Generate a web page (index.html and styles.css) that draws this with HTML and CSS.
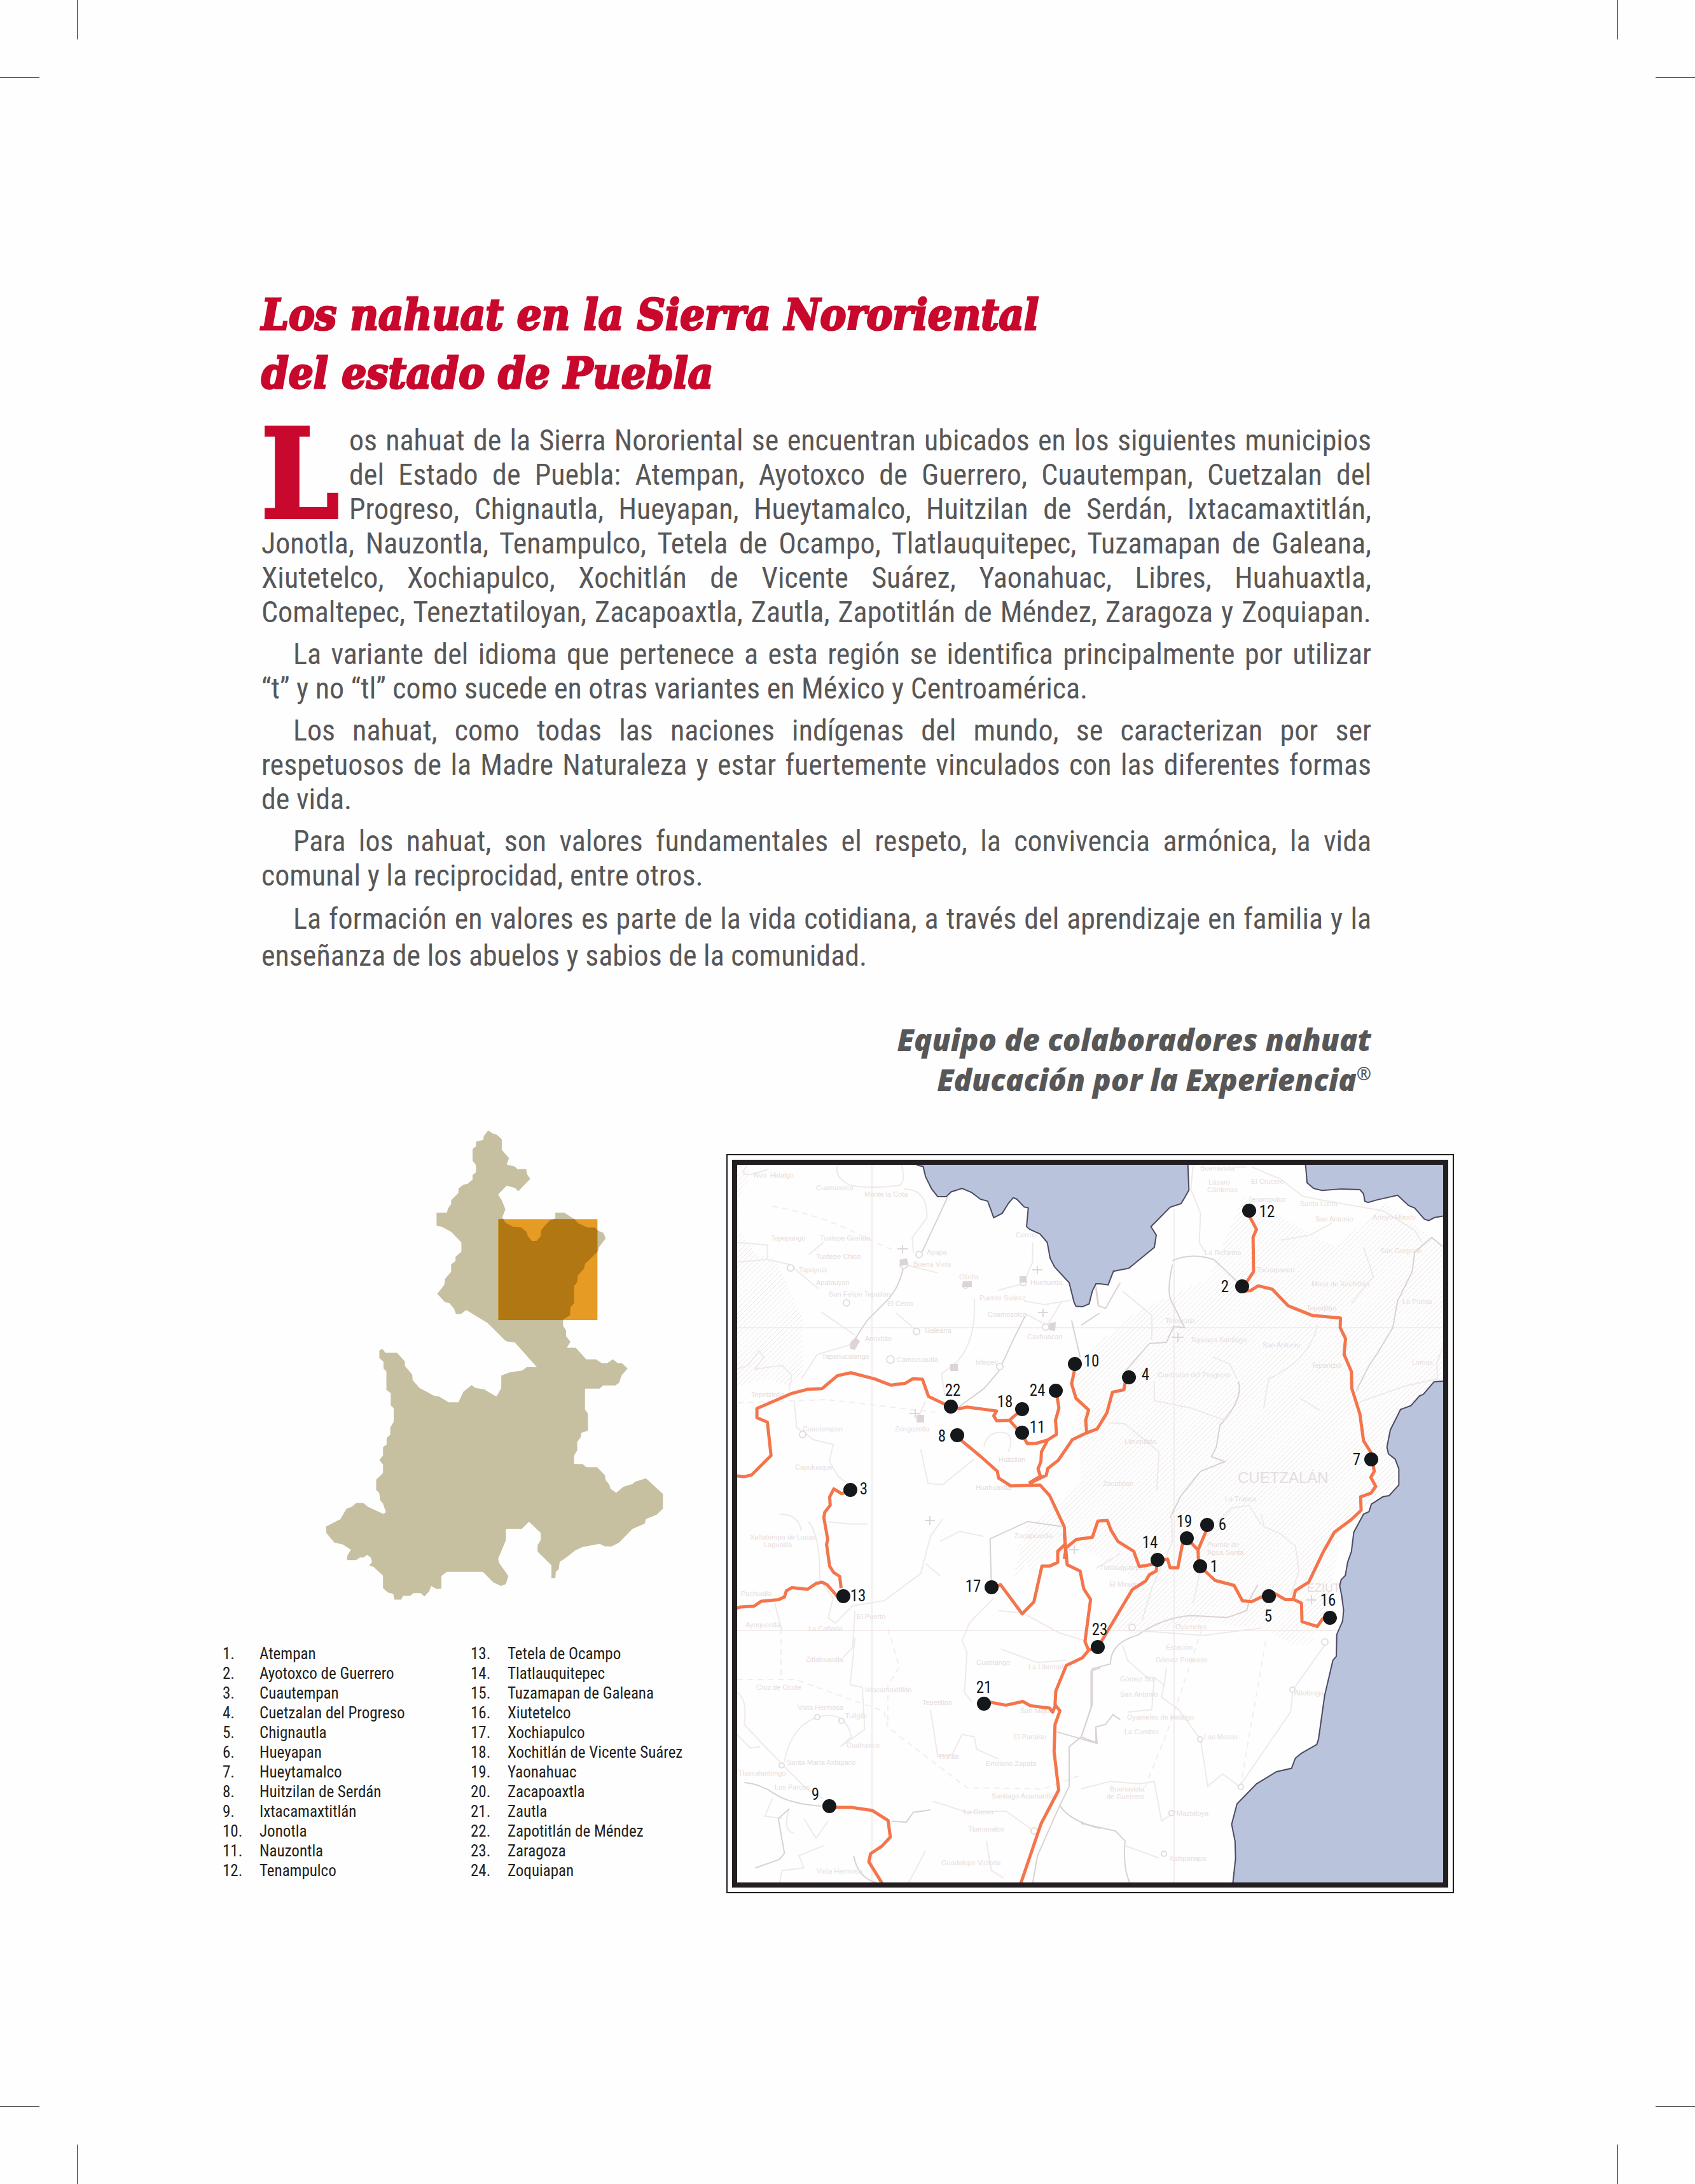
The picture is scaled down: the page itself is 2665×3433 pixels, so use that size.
FILE: index.html
```html
<!DOCTYPE html>
<html lang="es">
<head>
<meta charset="utf-8">
<meta name="viewport" content="width=device-width, initial-scale=1">
<title>Los nahuat en la Sierra Nororiental del estado de Puebla</title>
<link rel="stylesheet" href="styles.css">
</head>
<body>
<main>
  <article class="intro">
    <h1 class="title">Los nahuat en la Sierra Nororiental<br>del estado de Puebla</h1>
    <div class="copy">
      <p class="lead"><span class="dropcap">L</span><span class="line">os nahuat de la Sierra Nororiental se encuentran ubicados en los siguientes municipios</span>
        <span class="line">del Estado de Puebla: Atempan, Ayotoxco de Guerrero, Cuautempan, Cuetzalan del</span>
        <span class="line">Progreso, Chignautla, Hueyapan, Hueytamalco, Huitzilan de Serdán, Ixtacamaxtitlán,</span>
        <span class="line">Jonotla, Nauzontla, Tenampulco, Tetela de Ocampo, Tlatlauquitepec, Tuzamapan de Galeana,</span>
        <span class="line">Xiutetelco, Xochiapulco, Xochitlán de Vicente Suárez, Yaonahuac, Libres, Huahuaxtla,</span>
        <span class="line">Comaltepec, Teneztatiloyan, Zacapoaxtla, Zautla, Zapotitlán de Méndez, Zaragoza y Zoquiapan.</span></p>
      <p><span class="line first">La variante del idioma que pertenece a esta región se identifica principalmente por utilizar</span>
        <span class="line last">“t” y no “tl” como sucede en otras variantes en México y Centroamérica.</span></p>
      <p><span class="line first">Los nahuat, como todas las naciones indígenas del mundo, se caracterizan por ser</span>
        <span class="line">respetuosos de la Madre Naturaleza y estar fuertemente vinculados con las diferentes formas</span>
        <span class="line last">de vida.</span></p>
      <p><span class="line first">Para los nahuat, son valores fundamentales el respeto, la convivencia armónica, la vida</span>
        <span class="line last">comunal y la reciprocidad, entre otros.</span></p>
      <p class="closing"><span class="line first">La formación en valores es parte de la vida cotidiana, a través del aprendizaje en familia y la</span>
        <span class="line last">enseñanza de los abuelos y sabios de la comunidad.</span></p>
    </div>
    <p class="signature">Equipo de colaboradores nahuat<br>Educación por la Experiencia<sup>®</sup></p>
  </article>

  <section class="atlas">
    <div class="locator">
      <svg class="state" viewBox="0 0 530 738" role="img" aria-label="Estado de Puebla">
        <defs>
          <path id="puebla" d="M752 73L770 82 788 86 808 100V133L838 158 828 178 862 184 872 192H908L912 208 925 222 876 260 862 250 828 243 793 270 808 288 823 316 810 340 823 357 855 370 888 372 908 384 915 398 932 414H950L968 398 970 380 985 366 1005 350 1028 344V326H1065L1108 347 1120 358 1160 372H1190L1205 382 1225 388 1235 405 1208 432 1203 445 1150 484 1146 498 1120 520 1118 540 1105 552V605L1090 617 1088 642 1060 655V675L1072 688V706L1090 724 1075 742H1112L1155 778H1195L1220 790H1240L1265 778 1285 790H1302L1325 806 1300 828 1290 850 1275 858H1225L1210 868H1150V932L1162 945V998L1135 1004 1132 1018 1118 1032V1058L1105 1074V1100H1140L1155 1110H1200L1232 1135 1235 1150 1250 1164 1254 1176 1278 1189 1308 1170 1345 1162 1355 1155 1400 1144 1470 1192V1238L1445 1256 1400 1270 1395 1284 1345 1300 1290 1342 1260 1354H1232L1210 1346 1140 1356 1110 1366 1080 1384 1046 1402 1042 1424 1030 1432 1028 1452H1012V1412L955 1370V1350L968 1335V1312L920 1278 890 1300H825V1335L808 1365 793 1392 798 1406 835 1445 825 1470 805 1476 772 1464 730 1432H582L560 1445V1484L540 1485 518 1476 510 1492 490 1508 475 1498H445L432 1506H402L395 1518H367L362 1500 340 1496 320 1482V1444L280 1416 263 1414 275 1402 270 1388 255 1380 240 1388H225L210 1396H172L174 1382 188 1364 155 1348 120 1342 87 1312V1292L145 1270 170 1238 192 1232 210 1220H240L258 1232 282 1240 322 1254 332 1248 320 1222 308 1212 305 1190 292 1180V1148L320 1128V1102L305 1088 320 1074V1048L335 1040V1020L350 1010V988L364 970V928L352 920V882L334 872V815L322 806V785L305 774V750L318 746 330 758H378L410 784V798L440 825 442 842 470 866 500 878 530 890 550 892 590 910H630L650 878 684 857 700 866 735 870 785 892 792 885 806 866V828L840 818 892 812 910 802H952L862 726 825 722 750 666 662 626 640 638H620L612 622 592 604 575 602 543 576 572 548 575 530 600 508V485L618 475V462L642 446V418L600 385 562 370 540 366V326H582L588 312 600 300V288L630 265V252L650 240 668 237 688 224V210L702 202V180L688 166V130L702 122V108L732 102 734 90Z"/>
          <clipPath id="region"><rect x="794" y="346" width="407" height="311"/></clipPath>
        </defs>
        <g transform="scale(.3827 .5104) translate(-87 -73)">
          <use href="#puebla" fill="#c6c0a1"/>
          <rect x="794" y="346" width="407" height="311" fill="#e69b24"/>
          <use href="#puebla" fill="#b07712" clip-path="url(#region)"/>
        </g>
      </svg>
      <div class="legend">
        <ol>
          <li><span class="num">1.</span>Atempan</li>
          <li><span class="num">2.</span>Ayotoxco de Guerrero</li>
          <li><span class="num">3.</span>Cuautempan</li>
          <li><span class="num">4.</span>Cuetzalan del Progreso</li>
          <li><span class="num">5.</span>Chignautla</li>
          <li><span class="num">6.</span>Hueyapan</li>
          <li><span class="num">7.</span>Hueytamalco</li>
          <li><span class="num">8.</span>Huitzilan de Serdán</li>
          <li><span class="num">9.</span>Ixtacamaxtitlán</li>
          <li><span class="num">10.</span>Jonotla</li>
          <li><span class="num">11.</span>Nauzontla</li>
          <li><span class="num">12.</span>Tenampulco</li>
        </ol>
        <ol start="13">
          <li><span class="num">13.</span>Tetela de Ocampo</li>
          <li><span class="num">14.</span>Tlatlauquitepec</li>
          <li><span class="num">15.</span>Tuzamapan de Galeana</li>
          <li><span class="num">16.</span>Xiutetelco</li>
          <li><span class="num">17.</span>Xochiapulco</li>
          <li><span class="num">18.</span>Xochitlán de Vicente Suárez</li>
          <li><span class="num">19.</span>Yaonahuac</li>
          <li><span class="num">20.</span>Zacapoaxtla</li>
          <li><span class="num">21.</span>Zautla</li>
          <li><span class="num">22.</span>Zapotitlán de Méndez</li>
          <li><span class="num">23.</span>Zaragoza</li>
          <li><span class="num">24.</span>Zoquiapan</li>
        </ol>
      </div>
    </div>

    <figure class="map">
      <div class="map-frame">
      <svg viewBox="1159 1831 1110 1128" role="img" aria-label="Mapa de la Sierra Nororiental">
        <defs>
          <pattern id="hatch" width="8" height="8" patternUnits="userSpaceOnUse"><path d="M-2 10L10 -2M-2 2L2 -2M6 10L10 6" stroke="#ece7e7" stroke-width="1"/></pattern>
        </defs>
        <!-- municipal areas -->
        <path fill="url(#hatch)" d="M1159 1840L1178 1831 1175 1860 1160 1885V1931L1200 1985 1215 1995 1245 2040 1262 2100 1262 2160 1240 2180 1159 2150ZM1160 1975H1215L1262 2070V2150L1159 2180ZM1955 1880L2100 1960 2180 1890 2269 1960V2165L2230 2210 2190 2280 2195 2330 2110 2400 2085 2540 2060 2585H2030L1990 2560 1880 2550 1790 2570 1745 2560 1780 2480 1700 2430 1640 2420 1590 2490 1615 2400 1700 2330 1690 2140 1790 2060 1900 2010ZM1600 2430L1670 2390 1660 2440 1620 2470Z"/>
        <!-- fine grid and secondary roads -->
        <g class="grid"><path d="M1371 1831V2959M1159 2087H2269M1846 1900V2959M1159 2563H2269"/><path stroke-dasharray="9 7" d="M1214 1896Q1290 1910 1350 1940T1405 1962M1160 2205L1300 2200 1470 2220M1159 2640H1250L1390 2690 1396 2715 1520 2810 1640 2812 1700 2790M1228 2560V2640M1396 2560L1414 2620 1396 2650V2715M1800 2810L1840 2710 1890 2560M1990 2580L1950 2810"/></g>
        <g class="minor">
          <g transform="translate(1130 1800) scale(.38265)"><path d="M120 80Q60 150 200 100M540 165Q470 130 490 80M540 165Q620 180 745 165Q770 140 750 80M760 180Q860 180 855 300L795 380 800 440M75 400L200 410V470L290 490 410 590M80 480L200 470M370 450L430 400M760 490L900 525M1255 640L1340 655 1455 636M1290 400V480L1255 560M1410 640L1350 740 1255 690M1150 595L1250 570M1050 630Q1060 800 980 890L915 940 930 1030M730 690L810 760M420 685L560 780M75 920L120 905 165 845 185 870 150 920 260 905 300 945 290 1010M540 820L405 860 340 960M310 1050L320 1160 390 1210 470 1230 455 1300 490 1360 530 1390M850 1050L820 1120M830 1250L860 1390 920 1395 1050 1290M1090 1240Q1100 1180 1160 1180T1190 1260"/><path class="strong" d="M940 215L835 440M760 500Q740 590 690 640L610 720 545 820M1260 700L1210 800 1150 930 1090 1000 980 1080M1550 580L1560 650M1450 720L1485 870"/></g>
          <g transform="translate(1700 1800) scale(.38265)"><path class="strong" d="M375 475Q450 440 545 470L640 560M375 490Q350 600 370 640L425 750 380 745 350 810 280 815 180 930M645 970Q670 1040 570 1150L555 1240 535 1280 590 1300 490 1340 410 1440 365 1530M1490 420L1440 380 1370 440 1360 520 1300 640 1280 750 1220 850 1180 910 1130 1010M60 590L70 660 100 670 160 565M75 690L0 740"/><path d="M460 80L450 180 490 280 485 400 510 440M700 90L820 140 910 210 1010 230 1240 270 1370 350 1400 400M680 90L630 90M820 390L940 370 1030 320M540 870L610 900 640 960M300 970V1050L450 1080 590 1130M970 740Q940 880 770 960L750 1080M1490 820L1460 900 1465 960 1330 990 1130 1060M170 600L290 700V800M560 1550L620 1490 690 1480 740 1560M110 1140L180 1145 320 1260 310 1420M900 1040L980 1090M1110 650L1200 540 1160 420"/></g>
          <g transform="translate(1130 2380) scale(.38265 .38903)"><path d="M75 720Q120 750 105 850L230 980 360 1110 430 1150M270 1000Q300 850 410 820T545 900L500 940M75 890L130 945 170 940M370 30Q420 100 415 265L470 340 450 420 480 440 550 370 680 350 830 240 870 90 920 20M850 200L910 250M1130 340L1030 440 1000 510 1020 560 1010 720 1040 760M870 790L900 980 960 970 1000 890 1050 900 1060 950 1150 990M560 390L550 540 510 580M560 500L540 690 590 700 600 870 500 940M230 360L260 470M880 1160L1020 1205 1180 1200 1295 1280M910 110L990 70 1090 90M1150 390L1250 400 1400 480 1500 510M1160 545L1310 600 1430 590M1100 1320L1120 1440 1170 1470M850 1360L780 1490M220 1150L190 1220 260 1230M290 1190Q260 1280 310 1290M350 1230L400 1310 450 1240M430 1340L330 1380 350 1430 260 1440 250 1490M435 30L540 40 610 40M250 0Q330 0 340 70"/><path class="strong" d="M1120 270L1115 100 1270 30 1410 50M105 1085Q170 1090 230 1130T420 1180M710 1240L770 1245 800 1205 870 1195M290 1190L245 1230 270 1370 250 1395 150 1430M555 1380Q570 1470 650 1490M1568 620L1530 635V780L1490 900 1440 940V1100L1400 1180 1310 1380 1290 1490M1390 880L1550 925V860M1400 1175Q1440 1240 1568 1270"/></g>
          <g transform="translate(1700 2380) scale(.38265 .38903)"><path class="strong" d="M725 285L690 350 680 390 600 418 450 410Q330 420 230 490 120 520 120 605L45 625V770L0 900 65 925 60 860 100 850 130 810 160 830M0 1250L140 1280 180 1320Q170 1430 200 1490"/><path d="M370 0L375 110 290 300 250 430M740 0L750 50 820 80 880 130 895 230 860 330M490 220L460 360M170 530L190 590 270 660 300 660 340 690 330 740 400 790 490 910 520 1100 580 1050 650 1100 860 800 870 710 1000 530M350 620L340 700M60 220L160 160M300 660L290 790 190 800M0 1110L120 1080 240 1090 300 1080 330 1240 390 1200M180 1340L320 1390M220 470L500 490 740 460"/></g>
        </g>
        <g class="minor-node">
          <circle cx="1445" cy="1972" r="5"/><circle cx="1243" cy="1993" r="5"/><circle cx="1421" cy="1988" r="6"/><circle cx="1331" cy="2048" r="5"/><circle cx="1609" cy="2016" r="5"/><circle cx="1441" cy="2093" r="5"/><circle cx="1572" cy="2148" r="5"/><circle cx="1644" cy="2086" r="5"/><circle cx="1262" cy="2255" r="5"/><circle cx="1518" cy="2020" r="5"/><circle cx="1400" cy="2137" r="6"/><circle cx="1285" cy="2699" r="4"/><circle cx="1323" cy="2705" r="4"/><circle cx="1229" cy="2775" r="4"/><circle cx="1626" cy="2878" r="5"/><circle cx="1780" cy="2558" r="5"/><circle cx="2083" cy="2581" r="5"/><circle cx="2032" cy="2656" r="4"/><circle cx="1887" cy="2734" r="4"/><circle cx="1951" cy="2809" r="4"/><circle cx="1842" cy="2850" r="4"/><circle cx="1830" cy="2914" r="4"/>
        </g>
        <path class="built" d="M1337 2110L1345 2102 1352 2108 1344 2122 1336 2120ZM1494 2144H1506V2155H1494ZM1514 2014H1528V2023H1514ZM1414 1980L1426 1978 1428 1988 1416 1990ZM1603 2006H1614V2016H1603ZM1650 2080L1660 2078 1659 2092 1649 2091ZM1441 2224H1453V2236H1441Z"/>
        <path class="airfield" d="M1411 1963H1428M1419 1957V1970M1623 1996H1639M1631 1990V2003M1632 2063H1648M1640 2057V2070M1430 2222H1446M1439 2215V2229M1454 2390H1470M1462 2383V2397M1681 2436H1697M1689 2429V2443M1843 2102H1861M1852 2095V2110M2054 2515H2070M2062 2508V2522"/>
        <g class="places">
          <text x="1185" y="1851">Nvo. Hidalgo</text><text x="1283" y="1871">Cuamaxoco</text><text x="1359" y="1881">Monte la Cota</text><text x="1212" y="1950">Tepepango</text><text x="1289" y="1950">Tuxtepe Grande</text><text x="1283" y="1979">Tuxtepe Chico</text><text x="1256" y="2000">Tapayula</text><text x="1283" y="2020">Apatauyan</text><text x="1303" y="2038">San Felipe Tepatlán</text><text x="1457" y="1972">Apapa</text><text x="1436" y="1991">Buena Vista</text><text x="1395" y="2053">El Cerro</text><text x="1508" y="2011">Olintla</text><text x="1620" y="2020">Huehuetla</text><text x="1540" y="2044">Puente Suárez</text><text x="1597" y="1945">Cerros</text><text x="1454" y="2095">Galeana</text><text x="1360" y="2108">Amixtlán</text><text x="1292" y="2136">Tapahucalango</text><text x="1410" y="2141">Camocuautla</text><text x="1553" y="2070">Coamozolco</text><text x="1615" y="2105">Caxhuacan</text><text x="1534" y="2145">Ixtepec</text><text x="1181" y="2196">Tepetzintla</text><text x="1262" y="2250">Cuautempan</text><text x="1250" y="2310">Capuluaque</text><text x="1407" y="2250">Zongozotla</text><text x="1570" y="2298">Huitzilan</text><text x="1534" y="2342">Huahuaxtla</text>
          <text x="1887" y="1840">Buenavista</text><text x="1900" y="1862">Lázaro</text><text x="1898" y="1874">Cárdenas</text><text x="1967" y="1861">El Crucero</text><text x="1962" y="1889">Tenampulco</text><text x="2044" y="1896">Santa Lucía</text><text x="2068" y="1920">San Antonio</text><text x="2158" y="1917">Arroyo Hondo</text><text x="1894" y="1973">La Reforma</text><text x="1976" y="2000">Tacuapanco</text><text x="2062" y="2022">Mesa de Xochitlán</text><text x="2054" y="2060">Tepetitlán</text><text x="2170" y="1970">San Gregorio</text><text x="2205" y="2050">La Palma</text><text x="1832" y="2080">Tetoxcala</text><text x="1985" y="2118">San Antonio</text><text x="1872" y="2110">Tepeaca Santiago</text><text x="1820" y="2165">Cuetzalan del Progreso</text><text x="2062" y="2150">Tepantzol</text><text x="2220" y="2145">Lomas</text><text x="1768" y="2270">Limontitán</text><text x="1734" y="2336">Zacatipan</text><text x="1926" y="2360">La Tranca</text>
          <text class="capital" x="1946" y="2331">CUETZALÁN</text><text class="town" x="2055" y="2502">EZIUTL</text>
          <text x="1179" y="2420">Xaltatempa de Lucas</text><text x="1201" y="2432">Lagunilla</text><text x="1165" y="2509">Pachualia</text><text x="1172" y="2558">Ayoquentla</text><text x="1271" y="2564">La Cañada</text><text x="1347" y="2545">El Puerto</text><text x="1267" y="2612">Zitlalcuautla</text><text x="1189" y="2656">Cruz de Ocote</text><text x="1254" y="2688">Vista Hermosa</text><text x="1329" y="2701">Tuligtic</text><text x="1331" y="2747">Cuahuixco</text><text x="1237" y="2774">Santa María Axtapaco</text><text x="1161" y="2791">Tlaxcalantongo</text><text x="1218" y="2813">Los Parcos</text><text x="1360" y="2660">Ixtacamaxtitlán</text><text x="1450" y="2680">Tepetitlan</text><text x="1475" y="2765">Tlonila</text><text x="1550" y="2776">Emiliano Zapata</text><text x="1559" y="2827">Santiago Acamantlan</text><text x="1515" y="2852">La Cueva</text><text x="1522" y="2879">Tlamanalco</text><text x="1480" y="2932">Guadalupe Victoria</text><text x="1284" y="2945">Vista Hermosa</text><text x="1535" y="2617">Cuatitango</text><text x="1617" y="2624">La Libertad</text><text x="1594" y="2734">El Paraíso</text><text x="1604" y="2693">San Miguel</text><text x="1595" y="2418">Zacapoaxtla</text>
          <text x="1729" y="2468">Tlatlauquitepec</text><text x="1744" y="2494">El Mirador</text><text x="1848" y="2561">Oyameles</text><text x="1833" y="2593">Estación</text><text x="1817" y="2613">Gómez Poniente</text><text x="1761" y="2643">Gómez Sur</text><text x="1761" y="2667">San Antonio</text><text x="1772" y="2703">Oyameles de Hidalgo</text><text x="1768" y="2726">La Cumbre</text><text x="1893" y="2734">Las Mesas</text><text x="2035" y="2665">Altotonga</text><text x="1745" y="2816">Buenavista</text><text x="1740" y="2828">de Guerrero</text><text x="1850" y="2854">Maztaloya</text><text x="1838" y="2925">Xaltipanapa</text><text x="1898" y="2432">Puente de</text><text x="1898" y="2444">Agua Santa</text>
        </g>
        <!-- neighbouring territory -->
        <g class="outside">
          <path transform="translate(1130 1800) scale(.38265)" d="M800 60L815 82 840 88 850 130 875 180 900 212H935L955 192 1000 178 1040 195 1075 222 1105 230 1118 265 1130 298 1165 280 1190 240 1210 216 1225 222 1255 254 1272 258 1265 335 1278 346 1320 365 1350 400 1362 465 1380 500 1440 565 1460 645 1468 662 1495 664 1522 652 1535 600 1550 570 1568 570 1600 574 1622 518 1685 506 1790 420 1798 370 1776 335 1855 255 1900 240 1915 215 1932 185 1927 60Z"/>
          <path transform="translate(1700 1800) scale(.38265)" d="M915 60L922 85 928 155 955 178 990 186 1070 180 1145 183 1160 200 1165 230 1178 236 1215 225 1300 206 1345 248 1370 258 1410 304 1428 310 1450 298 1520 286V60Z"/>
          <path transform="translate(1700 1800) scale(.38265)" d="M1530 967L1450 972 1405 1024 1390 1030 1355 1070 1312 1086 1270 1170 1256 1240 1262 1268 1290 1290 1305 1330V1396L1265 1440 1240 1444 1192 1475 1182 1506 1160 1516 1120 1590 1110 1670 1095 1712 1085 1768 1068 1785 1062 1810 1070 1850 1078 1910 1074 1955 1050 2010 1048 2100 1034 2116 1000 2262 975 2440 968 2462 905 2498 880 2518 864 2560 802 2574 720 2624 640 2706 618 2790 632 2860 634 2930 620 3060H1530Z"/>
        </g>
        <!-- main roads -->
        <g class="roads">
          <path transform="translate(1130 1800) scale(.38265)" d="M60 1357L105 1362 135 1355 215 1275 200 1138 157 1120V1082L300 1020 365 1003 425 1000 488 947 543 935 640 960 708 986 768 978 797 960 837 962 862 1032 930 1065 985 1083 1020 1076 1142 1092 1130 1112 1142 1132 1195 1130 1247 1085M1195 1130L1247 1190 1268 1226 1305 1225 1350 1212 1388 1188 1384 1130 1398 1080 1390 1030M1350 1215L1326 1260 1324 1300 1312 1330 1322 1360 1275 1388M1463 920L1450 980 1468 1040 1520 1088 1508 1130 1512 1182M1670 975L1665 1005 1618 1015 1595 1100 1555 1166 1512 1182 1453 1210 1395 1295 1352 1328 1346 1356 1275 1390M981 1200L1080 1282 1145 1340 1150 1368 1200 1400 1320 1396 1360 1440 1420 1568 1425 1670 1420 1700M540 1420L505 1432 473 1412 456 1445 458 1480 436 1508 432 1530 448 1620 443 1640 456 1730 472 1755 497 1772 503 1820"/>
          <path transform="translate(1700 1800) scale(.38265)" d="M690 290L720 346 706 378 708 520 675 570M665 600L695 598 727 578 785 592 850 660 950 700 1065 710 1064 750 1086 795 1080 860 1110 930 1112 1000 1145 1105 1160 1215 1190 1262 1204 1340 1190 1365 1210 1402 1190 1430 1148 1445 1150 1500 1110 1538 1040 1590 995 1670 935 1795 880 1830 872 1864"/>
          <path transform="translate(1130 2380) scale(.38265 .38903)" d="M60 385L90 375 145 372 175 352 245 346 270 335 278 310 300 297 365 304 400 280 425 275 445 285 490 335M1125 300L1158 285 1247 403 1295 355 1328 210H1360L1393 195V150L1420 125M1420 80L1425 130 1432 205 1485 230 1500 302 1528 345 1505 515 1520 550 1495 580 1428 612 1385 715 1382 770 1402 795 1382 850 1378 960 1397 1115 1325 1250 1235 1510M1568 535L1520 550M1100 757L1180 772 1250 757 1280 774 1360 784 1372 800 1384 772M470 1185H545L630 1197 696 1238 705 1305 670 1342 624 1372 617 1405 680 1505M1425 138L1470 102 1535 94 1558 28 1597 26 1612 65 1640 110 1705 150 1728 212 1790 202"/>
          <path transform="translate(1700 2380) scale(.38265 .38903)" d="M69 537L210 305 265 270 280 245 308 230 313 190 355 182 365 217H397L416 120 434 98 480 145 482 200M517 60L480 145M489 212L550 268 628 288 662 350 700 354 740 335 790 318 840 346H875L905 360 907 435 970 454 995 418"/>
        </g>
        <g class="towns">
          <circle cx="1495" cy="2211" r="11"/><circle cx="1505" cy="2256" r="11"/><circle cx="1607" cy="2215" r="11"/><circle cx="1607" cy="2252" r="11"/><circle cx="1660" cy="2186" r="11"/><circle cx="1690" cy="2144" r="11"/><circle cx="1337" cy="2342" r="11"/><circle cx="1964" cy="1903" r="11"/><circle cx="1953" cy="2022" r="11"/><circle cx="1775" cy="2165" r="11"/><circle cx="2156" cy="2294" r="11"/><circle cx="1898" cy="2397" r="11"/><circle cx="1866" cy="2418" r="11"/><circle cx="1820" cy="2452" r="11"/><circle cx="1887" cy="2462" r="11"/><circle cx="1995" cy="2509" r="11"/><circle cx="2091" cy="2543" r="11"/><circle cx="1726" cy="2589" r="11"/><circle cx="1326" cy="2509" r="11"/><circle cx="1559" cy="2495" r="11"/><circle cx="1547" cy="2678" r="11"/><circle cx="1304" cy="2839" r="11"/>
        </g>
        <g class="numbers">
          <text x="1498" y="2194">22</text><text x="1481" y="2266">8</text><text x="1580" y="2212">18</text><text x="1631" y="2252">11</text><text x="1631" y="2194">24</text><text x="1716" y="2148">10</text><text x="1358" y="2349">3</text><text x="1992" y="1913">12</text><text x="1926" y="2031">2</text><text x="1801" y="2169">4</text><text x="2133" y="2303">7</text><text x="1922" y="2405">6</text><text x="1862" y="2400">19</text><text x="1808" y="2433">14</text><text x="1909" y="2471">1</text><text x="1994" y="2549">5</text><text x="2088" y="2524">16</text><text x="1729" y="2570">23</text><text x="1349" y="2517">13</text><text x="1530" y="2502">17</text><text x="1547" y="2661">21</text><text x="1282" y="2829">9</text>
        </g>
      </svg>
      </div>
    </figure>
  </section>
</main>
</body>
</html>
```
FILE: styles.css
```css
:root {
  --red: #c8082c;
  --ink: #231f20;
  --grey: #585758;
  --mark: linear-gradient(#2b2b2b, #2b2b2b);
}

* { box-sizing: border-box; }

/* Printer's crop marks sit in the four corners of the sheet. */
body {
  margin: 0;
  min-height: 100vh;
  color: var(--ink);
  font-family: "Roboto Condensed", Roboto, sans-serif;
  background:
    var(--mark) left 121px top 0 / 1px 62px,
    var(--mark) left 0 top 121px / 62px 1px,
    var(--mark) right 121px top 0 / 1px 62px,
    var(--mark) right 0 top 121px / 62px 1px,
    var(--mark) left 121px bottom 0 / 1px 62px,
    var(--mark) left 0 bottom 121px / 62px 1px,
    var(--mark) right 121px bottom 0 / 1px 62px,
    var(--mark) right 0 bottom 121px / 62px 1px,
    #fefefe;
  background-repeat: no-repeat;
}

main { padding: 448px 0; }

.intro { margin: 0 509px 0 411px; }

.title {
  margin: 0 0 33px;
  color: var(--red);
  font: italic 700 68px/92px "DejaVu Serif Condensed", "DejaVu Serif", serif;
  -webkit-text-stroke: 3px var(--red);
}

.copy {
  color: var(--grey);
  font-size: 46px;
  line-height: 54px;
}

.copy p { margin: 0 0 12px; }
.copy .closing { line-height: 58px; }

.dropcap {
  float: left;
  width: 138px;
  height: 162px;
  color: var(--red);
  font: 700 192px/162px "DejaVu Serif Condensed", "DejaVu Serif", serif;
  -webkit-text-stroke: 6px var(--red);
}

.line {
  display: block;
  text-align-last: justify;
  white-space: nowrap;
}

.first { padding-left: 50px; }
.last { text-align-last: left; }

.signature {
  margin: 72px 0 0;
  color: var(--grey);
  font: italic 800 47px/63px "Open Sans", sans-serif;
  text-align: right;
}

.signature sup {
  font-size: 28px;
  font-weight: 600;
  line-height: 0;
}

.atlas {
  display: flex;
  align-items: flex-start;
  margin: 48px 379px 0 350px;
}

.locator { width: 792px; }

.state {
  display: block;
  width: 530px;
  margin-left: 163px;
}

.legend {
  display: flex;
  margin-top: 69px;
}

.legend ol {
  width: 390px;
  margin: 0;
  padding: 0;
  list-style: none;
  font-size: 25px;
  line-height: 31px;
}

.legend li { display: flex; }
.num { width: 58px; }

.map {
  flex: 1;
  margin: 37px 0 0;
  padding: 7px;
  border: 2px solid var(--ink);
}

.map-frame { border: 8px solid var(--ink); }
.map svg { display: block; width: 100%; }

.grid, .minor, .roads { fill: none; }
.grid { stroke: #f3eded; stroke-width: 2; }
.minor path { stroke: #efe9e9; stroke-width: 2; vector-effect: non-scaling-stroke; }
.minor .strong { stroke: #d9d2d3; }
.minor-node { fill: #fff; stroke: #e3dcdc; stroke-width: 2; }
.built { fill: #ddd4d5; }
.airfield { stroke: #ddd8d8; stroke-width: 2; }
.places { fill: #e6dcdc; font: 11px "Liberation Sans", sans-serif; }
.capital { fill: #e3dedf; font-size: 24px; }
.town { font-size: 18px; }

.outside path {
  fill: #bac3dc;
  stroke: #4b4a63;
  stroke-width: 2;
  vector-effect: non-scaling-stroke;
}

.roads path {
  stroke: #f4754c;
  stroke-width: 5;
  stroke-linejoin: round;
  vector-effect: non-scaling-stroke;
}

.towns { fill: #14181b; }
.numbers { font-size: 25px; text-anchor: middle; fill: #14181b; }
```
